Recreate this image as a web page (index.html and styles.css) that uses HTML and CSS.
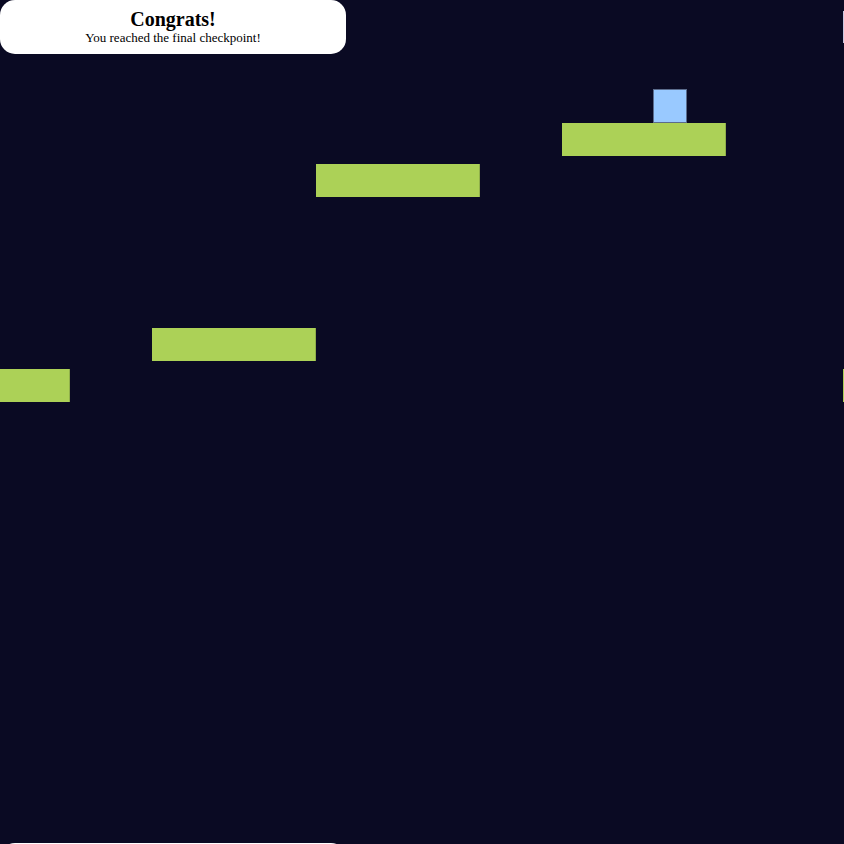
FILE: index.html
```html
<!DOCTYPE html>
<html lang="en">
<head>
<meta charset="utf-8">
<title>Platformer</title>
<link rel="stylesheet" href="styles.css">
</head>
<body>
  <div class="stage">
    <div class="platform p1"></div>
    <div class="platform p2"></div>
    <div class="platform p3"></div>
    <div class="platform p4"></div>
    <div class="platform p5"></div>
    <div class="player"></div>
    <div class="checkpoint-edge"></div>
    <div class="message">
      <h2 class="message-title">Congrats!</h2>
      <p class="message-text">You reached the final checkpoint!</p>
    </div>
    <div class="message message-lower"></div>
  </div>
</body>
</html>
```

FILE: styles.css
```css
html, body {
  margin: 0;
  padding: 0;
  background: #0a0a23;
}

.stage {
  position: relative;
  width: 844px;
  height: 844px;
  overflow: hidden;
  background: #0a0a23;
  font-family: "Liberation Serif", "Times New Roman", serif;
}

.platform {
  position: absolute;
  width: 164px;
  height: 33px;
  background: #acd157;
  box-shadow: inset -1px 0 0 #8fae4a;
}

.p1 { left: -94px; top: 369px; }
.p2 { left: 152px; top: 328px; }
.p3 { left: 316px; top: 164px; }
.p4 { left: 562px; top: 123px; }
.p5 { left: 843px; top: 369px; }

.player {
  position: absolute;
  left: 653px;
  top: 89px;
  width: 32px;
  height: 32px;
  background: #99c9ff;
  border: 1px solid #5b6c8c;
}

.checkpoint-edge {
  position: absolute;
  left: 843px;
  top: 11px;
  width: 30px;
  height: 32px;
  background: #c9c8e0;
}

.message {
  position: absolute;
  left: 0;
  top: 0;
  width: 346px;
  height: 54px;
  box-sizing: border-box;
  padding-top: 8px;
  background: #ffffff;
  border-radius: 15px;
  text-align: center;
  color: #000;
}

.message-lower {
  top: 843px;
}

.message-title {
  margin: 0;
  font-size: 20px;
  line-height: 22px;
  font-weight: bold;
}

.message-text {
  margin: 0;
  font-size: 13px;
  line-height: 15px;
}
```
